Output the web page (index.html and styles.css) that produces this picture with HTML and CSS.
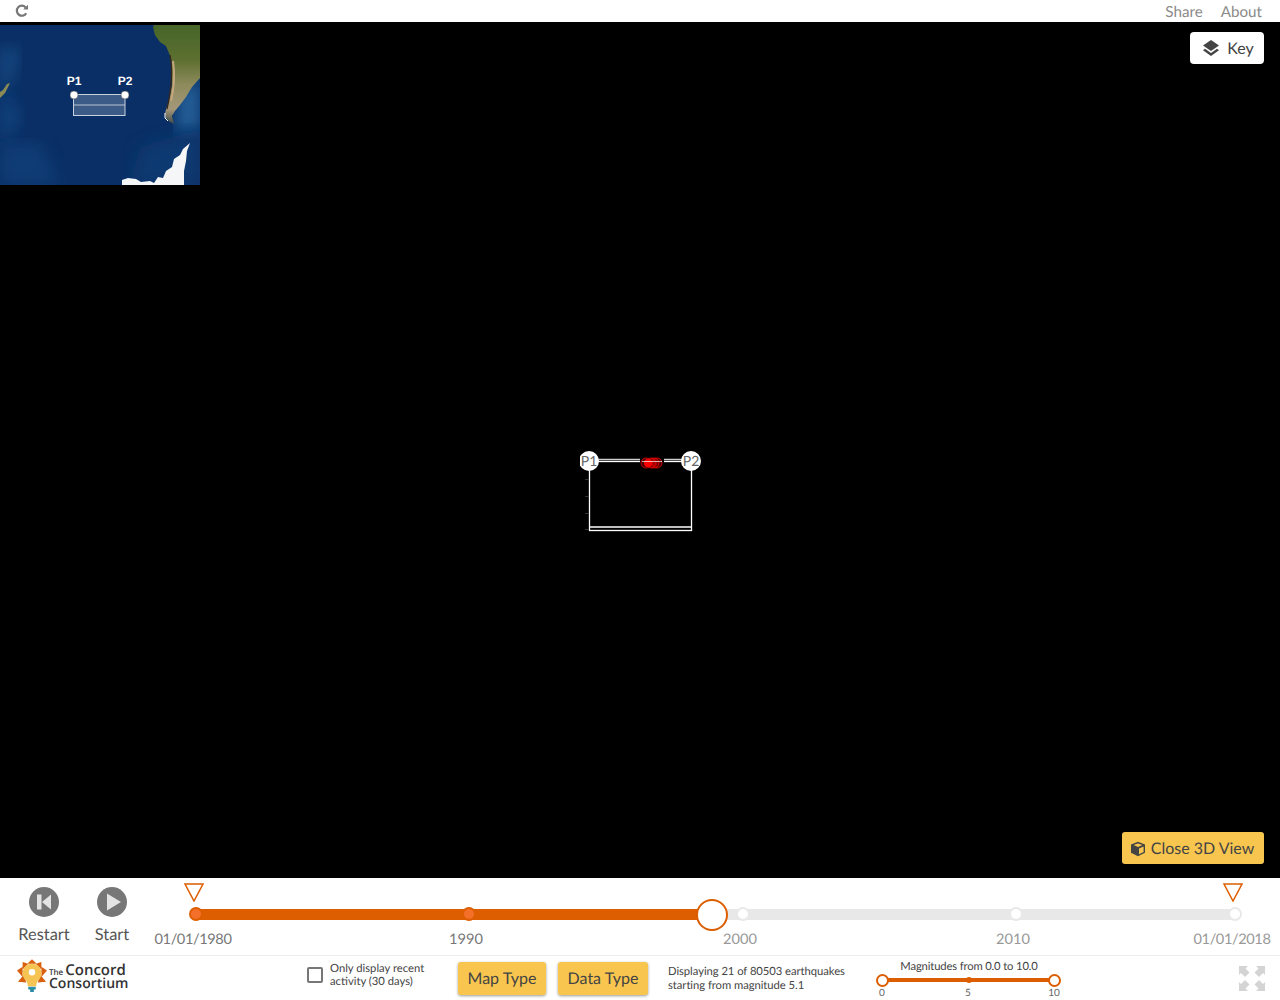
FILE: index.html
```html
<!DOCTYPE html>
<html>
<head>
  <title>Seismic Explorer</title>
  <link rel="stylesheet" href="styles.css">
</head>
<body>
  <div class="top-bar">
    <svg class="reload" width="14" height="14" viewBox="0 0 14 14">
      <path d="M11.2 9.2A5 5 0 1 1 10.6 3.4" fill="none" stroke="#777" stroke-width="2.2"/>
      <path d="M8.2 5.6H13V0.8Z" fill="#777"/>
    </svg>
    <div class="top-links">
      <span>Share</span>
      <span>About</span>
    </div>
  </div>

  <div class="viewport">
    <svg class="mini-map" width="200" height="160" viewBox="0 0 200 160">
      <defs>
        <linearGradient id="land" x1="0" y1="0" x2="0" y2="1">
          <stop offset="0" stop-color="#46662a"/>
          <stop offset="0.35" stop-color="#5d6f30"/>
          <stop offset="0.6" stop-color="#8d8a5c"/>
          <stop offset="0.85" stop-color="#a5987a"/>
          <stop offset="1" stop-color="#3d4a48"/>
        </linearGradient>
        <filter id="soft"><feGaussianBlur stdDeviation="0.4"/></filter>
        <filter id="haze"><feGaussianBlur stdDeviation="8"/></filter>
      </defs>
      <rect width="200" height="160" fill="#0a2f66"/>
      <path d="M0 22L20 24L14 50L0 75Z" fill="#1d5a92" opacity="0.6" filter="url(#haze)"/>
      <path d="M0 75L10 70L22 95L0 118Z" fill="#164f8a" opacity="0.6" filter="url(#haze)"/>
      <path d="M0 118H40L60 160H0Z" fill="#134a84" opacity="0.5" filter="url(#haze)"/>
      <path d="M178 66L200 52V105L176 108Z" fill="#2a6aa3" opacity="0.85" filter="url(#haze)"/>
      <path d="M140 122L200 104V160H130Z" fill="#0c3a72" opacity="0.9" filter="url(#haze)"/>
      <path d="M0 73L5 68L10 58L7 59L3 65L0 67Z" fill="#8a8a55" filter="url(#soft)"/>
      <path d="M153 2L155 10L160 17L166 21L171 33L172 48L172 60L169 75L165 88L166 93L170 97L174 99L172 91L175 86L180 80L186 72L192 62L200 53V0H154Z" fill="url(#land)" filter="url(#soft)"/>
      <path d="M170 30C173 46 172 62 167 84" fill="none" stroke="#35261a" stroke-width="1.300" filter="url(#soft)"/>
      <path d="M173 36C175 50 174 64 171 76" fill="none" stroke="#c4a77f" stroke-width="2" filter="url(#soft)"/>
      <path d="M165 88V93L168 96" fill="none" stroke="#fff" stroke-width="1"/>
      <path d="M122 155L128 153L136 154L141 157L150 156L154 158L158 152L163 153L166 146L172 142L174 134L180 130L183 124L190 118L187 126L186 136L184 146L184 160H122Z" fill="#f4f6f8" filter="url(#soft)"/>
      <g>
        <rect x="73.500" y="69.500" width="51.500" height="21" fill="#8a9db8" fill-opacity="0.4" stroke="#c8d2de"/>
        <line x1="73.500" y1="80" x2="125" y2="80" stroke="#b9c4d2"/>
        <circle cx="74" cy="70" r="4" fill="#fff" stroke="#333" stroke-width="0.500"/>
        <circle cx="125" cy="70" r="4" fill="#fff" stroke="#333" stroke-width="0.500"/>
      </g>
      <text class="map-pin" x="74" y="60">P1</text>
      <text class="map-pin" x="125" y="60">P2</text>
    </svg>

    <button class="key-btn">
      <svg width="18" height="18" viewBox="0 0 18 18">
        <path d="M9 1L17 6.500L9 12L1 6.500Z" fill="#444"/>
        <path d="M3 9.800L1 11.200L9 17L17 11.200L15 9.800L9 14Z" fill="#444"/>
      </svg>
      Key
    </button>

    <svg class="cross-section" width="130" height="90" viewBox="0 0 130 90">
      <g fill="none" stroke="#fff" stroke-width="1.300">
        <rect x="9.500" y="11.500" width="102" height="69"/>
        <line x1="9" y1="77" x2="112" y2="77"/>
        <line x1="9" y1="9.500" x2="112" y2="9.500" stroke="#ccc"/>
      </g>
      <g stroke="#333">
        <line x1="5" y1="29.500" x2="9" y2="29.500"/>
        <line x1="5" y1="46.500" x2="9" y2="46.500"/>
        <line x1="5" y1="63.500" x2="9" y2="63.500"/>
        <line x1="5" y1="79.500" x2="9" y2="79.500"/>
      </g>
      <rect x="60" y="8" width="24" height="11" fill="#000"/>
      <g fill="#f00" fill-opacity="0.3" stroke="#e00" stroke-width="0.800">
        <circle cx="66" cy="13" r="5"/>
        <circle cx="71" cy="13" r="5"/>
        <circle cx="74" cy="13" r="5"/>
        <circle cx="77" cy="13" r="5"/>
      </g>
      <circle cx="68" cy="13" r="4" fill="#f00"/>
      <line x1="62" y1="11.500" x2="82" y2="11.500" stroke="#fff" stroke-opacity="0.700"/>
      <circle cx="108" cy="13" r="6" fill="#f00"/>
      <circle cx="9" cy="11" r="10" fill="#fff"/>
      <circle cx="111" cy="11" r="10" fill="#fff"/>
      <text class="box-pin" x="9" y="16">P1</text>
      <text class="box-pin" x="111" y="16">P2</text>
    </svg>

    <button class="yellow-btn close-3d">
      <svg width="16" height="16" viewBox="0 0 16 16">
        <path d="M8 .8L15 3.600V11.800L8 15.200L1 11.800V3.600Z" fill="#444"/>
        <path d="M8 2.400L12.400 4.100L8 5.900L3.600 4.100Z" fill="#f8c64f"/>
        <path d="M9 7.400L13.600 5.500V11L9 13.300Z" fill="#f8c64f"/>
      </svg>
      Close 3D View
    </button>
  </div>

  <div class="bottom">
    <div class="timeline-row">
      <div class="play-btn restart-btn">
        <svg width="30" height="30" viewBox="0 0 30 30">
          <circle cx="15" cy="15" r="15" fill="#777"/>
          <path d="M8 7.500H12.500V22.500H8ZM13 15L22 7.500V22.500Z" fill="#e4e4e4"/>
        </svg>
        <span>Restart</span>
      </div>
      <div class="play-btn start-btn">
        <svg width="30" height="30" viewBox="0 0 30 30">
          <circle cx="15" cy="15" r="15" fill="#777"/>
          <path d="M10 6.500L24 15L10 23.500Z" fill="#e4e4e4"/>
        </svg>
        <span>Start</span>
      </div>

      <div class="timeline">
        <div class="track"></div>
        <div class="track-done"></div>
        <svg class="marker marker-from" width="20" height="19" viewBox="0 0 20 19"><path d="M1 1H19L10 18Z" fill="#fff" stroke="#dc5e00" stroke-width="1.500"/></svg>
        <svg class="marker marker-to" width="20" height="19" viewBox="0 0 20 19"><path d="M1 1H19L10 18Z" fill="#fff" stroke="#dc5e00" stroke-width="1.500"/></svg>
        <i class="dot dot-done" style="left: 42px"></i>
        <i class="dot dot-done" style="left: 315px"></i>
        <i class="dot" style="left: 589px"></i>
        <i class="dot" style="left: 862px"></i>
        <i class="dot" style="left: 1081px"></i>
        <div class="handle"></div>
        <span class="tick tick-date" style="left: 39px">01/01/1980</span>
        <span class="tick" style="left: 312px">1990</span>
        <span class="tick tick-later" style="left: 586px">2000</span>
        <span class="tick tick-later" style="left: 859px">2010</span>
        <span class="tick tick-later tick-date" style="left: 1078px">01/01/2018</span>
      </div>
    </div>

    <div class="tools-row">
      <div class="logo">
        <svg width="32" height="36" viewBox="0 0 32 36">
          <g fill="#d9600f">
            <path d="M16 0L21 5H11Z"/>
            <path d="M6 3L12 5L6 11Z"/>
            <path d="M26 3L20 5L26 11Z"/>
            <path d="M0 12L6 8V19Z"/>
            <path d="M32 12L26 8V19Z"/>
            <path d="M1 24L7 17L10 25Z"/>
            <path d="M31 24L25 17L22 25Z"/>
          </g>
          <path d="M16 5A10 10 0 0 1 22 23C21 25 20.500 27 20.500 29H11.500C11.500 27 11 25 10 23A10 10 0 0 1 16 5Z" fill="#f6c453"/>
          <circle cx="16" cy="14" r="3.500" fill="#fff"/>
          <path d="M12 29.500H20V32.500H18V35H14V32.500H12Z" fill="#2b8ea3"/>
        </svg>
        <div class="logo-text">
          <div class="logo-top"><small>The</small>Concord</div>
          <div>Consortium</div>
        </div>
      </div>

      <label class="recent">
        <span class="checkbox"></span>
        <span>Only display recent<br>activity (30 days)</span>
      </label>

      <button class="yellow-btn map-type">Map Type</button>
      <button class="yellow-btn data-type">Data Type</button>

      <div class="summary">Displaying 21 of 80503 earthquakes<br>starting from magnitude 5.1</div>

      <div class="mag-slider">
        <div class="mag-title">Magnitudes from 0.0 to 10.0</div>
        <div class="mag-track"></div>
        <i class="mag-mid"></i>
        <i class="mag-handle mag-handle-left"></i>
        <i class="mag-handle mag-handle-right"></i>
        <span class="mag-label" style="left: 6px">0</span>
        <span class="mag-label" style="left: 92px">5</span>
        <span class="mag-label" style="left: 178px">10</span>
      </div>

      <svg class="fullscreen" width="28" height="27" viewBox="0 0 28 27" fill="#d4d4d4">
        <path d="M1 1H10L7.500 3.500L11.500 7.500L7 12L3 8L1 10Z"/>
        <path d="M27 1H18L20.500 3.500L16.500 7.500L21 12L25 8L27 10Z"/>
        <path d="M1 26H10L7.500 23.500L11.500 19.500L7 15L3 19L1 17Z"/>
        <path d="M27 26H18L20.500 23.500L16.500 19.500L21 15L25 19L27 17Z"/>
      </svg>
    </div>
  </div>
</body>
</html>
```

FILE: styles.css
```css
body {
  font-family: 'Lato', sans-serif;
  text-rendering: geometricPrecision;
  background: #fff;
  margin: 0;
  padding: 0;
  color: #444;
}
button {
  font-family: inherit;
  text-rendering: inherit;
  border: none;
  cursor: pointer;
}
.top-bar {
  height: 22px;
  display: flex;
  align-items: center;
  justify-content: space-between;
  padding: 0 18px 0 15px;
}
.top-links {
  display: flex;
  gap: 18px;
  font-size: 15.200px;
  color: #8a8a8a;
  padding-top: 2px;
}
.viewport {
  position: relative;
  height: 856px;
  background: #000;
}
.mini-map {
  position: absolute;
  left: 0;
  top: 3px;
}
.map-pin {
  font: bold 12px 'Liberation Sans', sans-serif;
  fill: #fff;
  text-anchor: middle;
}
.box-pin {
  font: 14px 'Lato', sans-serif;
  fill: #666;
  text-anchor: middle;
}
.key-btn {
  position: absolute;
  top: 10px;
  right: 16px;
  width: 74px;
  height: 32px;
  padding: 0 0 0 2px;
  background: #fff;
  border-radius: 4px;
  font-size: 16px;
  color: #444;
  display: flex;
  align-items: center;
  justify-content: center;
  gap: 7px;
}
.cross-section {
  position: absolute;
  left: 580px;
  top: 428px;
}
.yellow-btn {
  background: #f8c64f;
  color: #444;
  border-radius: 3px;
  font-size: 16px;
}
.close-3d {
  position: absolute;
  right: 16px;
  bottom: 14px;
  width: 142px;
  height: 32px;
  padding: 0 2px 0 0;
  display: flex;
  align-items: center;
  justify-content: center;
  gap: 5px;
}
.close-3d svg {
  margin-top: 1px;
}
.bottom {
  height: 122px;
}
.timeline-row {
  position: relative;
  height: 77px;
  border-bottom: 1px solid #eee;
  display: flex;
}
.play-btn {
  width: 68px;
  display: flex;
  flex-direction: column;
  align-items: center;
  gap: 8px;
  padding-top: 9px;
  font-size: 16.400px;
  color: #555;
}
.restart-btn {
  margin-left: 10px;
}
.timeline {
  position: relative;
  flex: 1;
  margin-left: 8px;
}
.track {
  position: absolute;
  left: 42px;
  width: 1041px;
  top: 31px;
  height: 11px;
  background: #e8e8e8;
}
.track-done {
  position: absolute;
  left: 42px;
  width: 516px;
  top: 31px;
  height: 11px;
  background: #dc5e00;
}
.marker {
  position: absolute;
  top: 5px;
}
.marker-from {
  left: 30px;
}
.marker-to {
  left: 1069px;
}
.dot {
  position: absolute;
  top: 36px;
  width: 10px;
  height: 10px;
  margin: -7px 0 0 -7px;
  border-radius: 50%;
  background: #fff;
  border: 2px solid #e8e8e8;
}
.dot-done {
  background: #f4702a;
  border-color: #dc5e00;
}
.handle {
  position: absolute;
  left: 542px;
  top: 21px;
  width: 28px;
  height: 28px;
  background: #fff;
  border: 2px solid #dc5e00;
  border-radius: 50%;
}
.tick {
  position: absolute;
  top: 53px;
  font-size: 14.600px;
  color: #777;
  transform: translateX(-50%);
  white-space: nowrap;
}
.tick-later {
  color: #999;
}
.tick-date {
  letter-spacing: -0.400px;
}
.tools-row {
  position: relative;
  height: 44px;
  display: flex;
  align-items: center;
}
.logo {
  display: flex;
  align-items: center;
  margin-left: 17px;
  width: 290px;
  gap: 1px;
}
.logo svg {
  width: 30px;
  height: 34px;
  margin-bottom: 5px;
}
.logo-text {
  font-family: 'Open Sans', sans-serif;
  font-weight: 600;
  font-size: 14px;
  line-height: 11px;
  color: #333;
  margin-left: 1px;
  margin-bottom: 2px;
}
.logo-top {
  font-size: 15px;
  white-space: nowrap;
}
.logo-text small {
  font-size: 8px;
  margin-right: 2px;
}
.recent {
  display: flex;
  align-items: center;
  gap: 7px;
  width: 151px;
  margin-bottom: 7px;
  font-size: 11.250px;
  line-height: 13px;
}
.checkbox {
  width: 12px;
  height: 12px;
  border: 2px solid #777;
  border-radius: 2px;
}
.map-type,
.data-type {
  height: 33px;
  padding: 0;
  box-shadow: 0 1px 3px rgba(0,0,0,0.4);
}
.map-type {
  width: 88px;
  margin-right: 12px;
}
.data-type {
  width: 90px;
  margin-right: 20px;
}
.summary {
  width: 200px;
  padding-top: 1px;
  font-size: 11.250px;
  line-height: 14px;
  letter-spacing: -0.050px;
}
.mag-slider {
  position: relative;
  width: 190px;
  height: 44px;
  margin-left: 8px;
}
.mag-title {
  text-align: center;
  font-size: 11.250px;
  letter-spacing: -0.150px;
  margin-top: 4px;
  margin-right: 4px;
}
.mag-track {
  position: absolute;
  left: 7px;
  width: 172px;
  top: 22px;
  height: 4px;
  background: #dc5e00;
}
.mag-mid {
  position: absolute;
  left: 90px;
  top: 21px;
  width: 6px;
  height: 6px;
  border-radius: 50%;
  background: #dc5e00;
}
.mag-handle {
  position: absolute;
  top: 18px;
  width: 9px;
  height: 9px;
  border: 2px solid #dc5e00;
  border-radius: 50%;
  background: #fff;
}
.mag-handle-left {
  left: 0;
}
.mag-handle-right {
  left: 172px;
}
.mag-label {
  position: absolute;
  top: 31px;
  font-size: 10px;
  color: #666;
  transform: translateX(-50%);
}
.fullscreen {
  position: absolute;
  right: 14px;
  top: 9px;
}
```
